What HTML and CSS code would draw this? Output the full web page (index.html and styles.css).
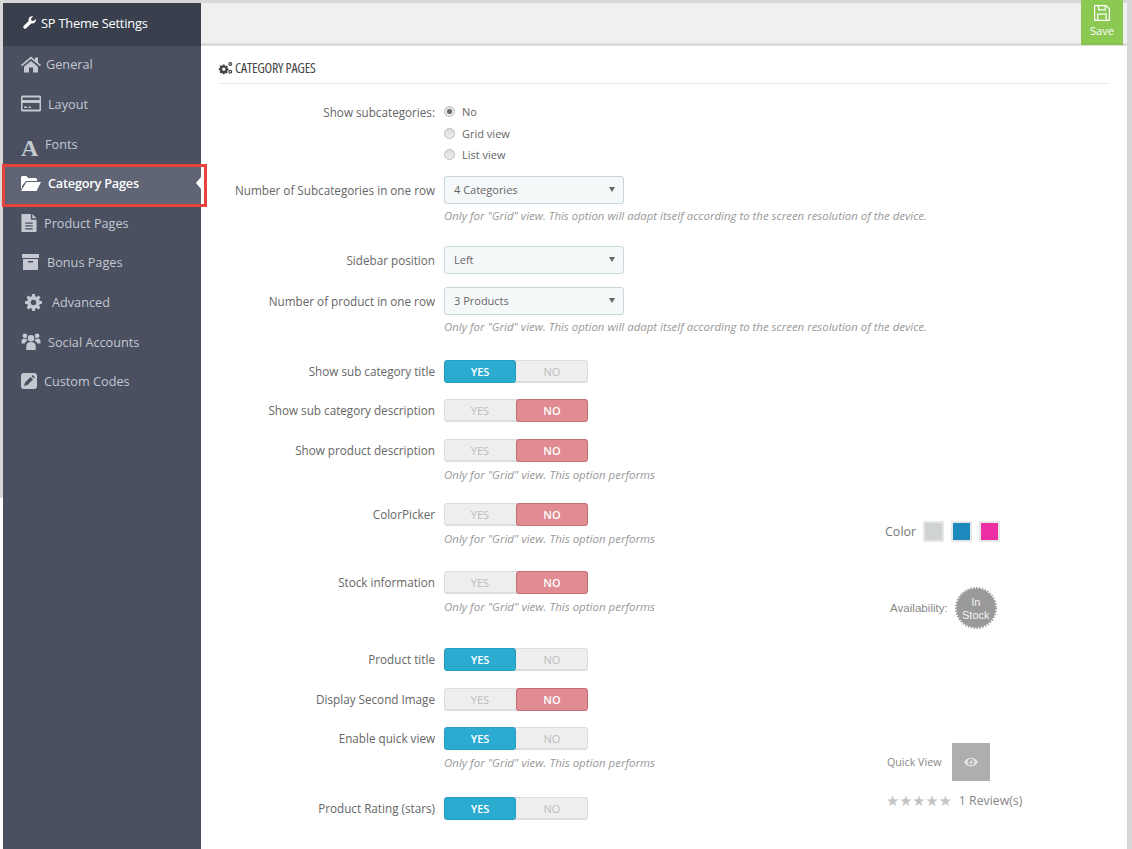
FILE: index.html
```html
<!DOCTYPE html>
<html lang="en">
<head>
<meta charset="utf-8">
<title>SP Theme Settings</title>
<link rel="stylesheet" href="styles.css">
</head>
<body>
<div class="page">
  <aside class="sidebar">
    <div class="brand">
      <svg class="brand-icon" viewBox="0 0 16 16"><path d="M15.6 3.6c.5 1.500.1 3.300-1.100 4.500-1.300 1.200-3 1.500-4.500 1L4 15.100c-.9.900-2.200.9-3 0-.9-.9-.9-2.200 0-3L7 6.100c-.5-1.500-.2-3.300 1-4.500C9.300.4 11 0 12.500.5L9.800 3.200l.6 2.500 2.500.6z"/></svg>
      <span>SP Theme Settings</span>
    </div>
    <nav class="menu">
      <a class="item"><svg class="ico ico-w20" viewBox="0 0 20 16"><path d="M10 0 0 8.500l1 1.200L10 2.200l9 7.500 1-1.200-3-2.600V1h-3v2.600zM3 10.200V16h5v-5h4v5h5v-5.800L10 4.400z"/></svg><span class="t1">General</span></a>
      <a class="item"><svg class="ico ico-w20" viewBox="0 0 20 16"><path fill-rule="evenodd" d="M1.500 0h17A1.500 1.500 0 0 1 20 1.500v13a1.500 1.500 0 0 1-1.500 1.500h-17A1.500 1.500 0 0 1 0 14.500v-13A1.500 1.500 0 0 1 1.500 0zM1.500 2v2.500h17V2zm0 5.500V14h17V7.500zM3 11h3v1.500H3zm4.500 0H10v1.500H7.500z"/></svg><span class="t2">Layout</span></a>
      <a class="item"><span class="letter">A</span><span class="t-fonts">Fonts</span></a>
      <a class="item active"><svg class="ico ico-w20" viewBox="0 0 20 15"><path d="M0 1.500A1.500 1.500 0 0 1 1.500 0h4L7 2h7.500A1.500 1.500 0 0 1 16 3.500V5H5L1 10V13L0 12zM5.500 6H20l-4.500 9H0z"/></svg><span class="t2">Category Pages</span><i class="caret"></i><i class="redbox"></i></a>
      <a class="item"><svg class="ico ico-w16" viewBox="0 0 16 19"><path fill-rule="evenodd" d="M1 0h9v6h6v12a1 1 0 0 1-1 1H1a1 1 0 0 1-1-1V1a1 1 0 0 1 1-1zm10.500 0L16 4.500h-4.500zM4 9v1.300h8V9zm0 3v1.300h8V12zm0 3v1.300h8V15z"/></svg><span class="t0">Product Pages</span></a>
      <a class="item"><svg class="ico ico-w17" viewBox="0 0 17 16"><path fill-rule="evenodd" d="M0 0h17v4H0zM1 5h15v11H1zm5 2v1.500h5V7z"/></svg><span class="t3">Bonus Pages</span></a>
      <a class="item"><svg class="ico ico-cog" viewBox="0 0 16 16"><path fill-rule="evenodd" d="M6.800 0h2.400l.4 2.200 1.300.6 1.900-1.300 1.700 1.700-1.300 1.900.6 1.300 2.200.4v2.400l-2.200.4-.6 1.300 1.300 1.900-1.700 1.700-1.900-1.300-1.300.6-.4 2.200H6.800l-.4-2.200-1.300-.6-1.900 1.300-1.700-1.700 1.300-1.900-.6-1.300L0 9.200V6.800l2.200-.4.6-1.300-1.300-1.900 1.700-1.700 1.900 1.300 1.300-.6zM8 5.400a2.600 2.600 0 1 0 0 5.200 2.600 2.600 0 0 0 0-5.200z"/></svg><span class="t4">Advanced</span></a>
      <a class="item"><svg class="ico ico-w20" viewBox="0 0 20 18"><circle cx="10" cy="5.500" r="3.500"/><circle cx="3.500" cy="3" r="2.500"/><circle cx="16.500" cy="3" r="2.500"/><path d="M5 18v-4.500C5 11 7 9.500 10 9.500s5 1.500 5 4V18zM0 11V8c0-1 1-2 2-2h3l1 2.500C4.500 9 3.800 10 3.500 11zM20 11V8c0-1-1-2-2-2h-3l-1 2.500c1.500.5 2.200 1.500 2.500 2.500z"/></svg><span class="t2">Social Accounts</span></a>
      <a class="item"><svg class="ico ico-w16" viewBox="0 0 16 16"><path fill-rule="evenodd" d="M3 0h10a3 3 0 0 1 3 3v10a3 3 0 0 1-3 3H3a3 3 0 0 1-3-3V3a3 3 0 0 1 3-3zm6.500 4L4 9.500 3 13l3.500-1L12 6.500zm1-1L12.900 5.600 14 4.400 11.600 2z"/></svg><span class="t0">Custom Codes</span></a>
    </nav>
  </aside>

  <main class="content">
    <header class="topbar">
      <button class="save" type="button">
        <svg class="save-icon" viewBox="0 0 16 16"><path fill-rule="evenodd" d="M1 0h11.500L16 3.500V15a1 1 0 0 1-1 1H1a1 1 0 0 1-1-1V1a1 1 0 0 1 1-1zm.2 1.200v13.600h2V8.500h9.600v6.300h2V4L12 1.200h-.2V5.500H4V1.200zM5.200 1.200v3.100h5.400V1.200zM4.400 9.700v5.100h7.200V9.700z"/></svg>
        <span>Save</span>
      </button>
    </header>

    <section class="panel">
      <h2 class="panel-title">
        <svg class="cogs" viewBox="0 0 16 14"><path fill-rule="evenodd" d="M4.400 3h2l.3 1.300.9.400 1.200-.7 1.300 1.300-.7 1.200.4.900 1.200.3v2l-1.200.3-.4.900.7 1.200-1.300 1.300-1.200-.7-.9.400-.3 1.200h-2l-.3-1.200-.9-.4-1.200.7L.5 11.800l.7-1.200-.4-.9L-.4 9.400v-2l1.200-.3.4-.9-.7-1.200L1.800 3.700 3 4.400l.9-.4zM5.400 6.500a1.900 1.900 0 1 0 0 3.800 1.900 1.900 0 0 0 0-3.800zM13 0a2.300 2.300 0 1 1 0 4.600A2.300 2.300 0 0 1 13 0zm0 1.400a.9.900 0 1 0 0 1.800.9.900 0 0 0 0-1.800zM13 9a2.300 2.300 0 1 1 0 4.600A2.300 2.300 0 0 1 13 9zm0 1.400a.9.900 0 1 0 0 1.800.9.900 0 0 0 0-1.800z"/></svg>
        <span>CATEGORY PAGES</span>
      </h2>

      <div class="row row-radio">
        <label class="label">Show subcategories:</label>
        <div class="radios">
          <div class="radio-line"><i class="radio on"></i><span>No</span></div>
          <div class="radio-line"><i class="radio"></i><span>Grid view</span></div>
          <div class="radio-line"><i class="radio"></i><span>List view</span></div>
        </div>
      </div>

      <div class="row r-select1">
        <label class="label">Number of Subcategories in one row</label>
        <div><div class="select"><span>4 Categories</span><i class="arrow"></i></div>
        <p class="help help-long">Only for "Grid" view. This option will adapt itself according to the screen resolution of the device.</p></div>
      </div>

      <div class="row r-select2">
        <label class="label">Sidebar position</label>
        <div><div class="select"><span>Left</span><i class="arrow"></i></div></div>
      </div>

      <div class="row r-select3">
        <label class="label">Number of product in one row</label>
        <div><div class="select"><span>3 Products</span><i class="arrow"></i></div>
        <p class="help help-long">Only for "Grid" view. This option will adapt itself according to the screen resolution of the device.</p></div>
      </div>

      <div class="row r-t1">
        <label class="label">Show sub category title</label>
        <div class="toggle"><b class="yes on">YES</b><b class="no">NO</b></div>
      </div>

      <div class="row r-t2">
        <label class="label">Show sub category description</label>
        <div class="toggle"><b class="yes">YES</b><b class="no on">NO</b></div>
      </div>

      <div class="row r-t3">
        <label class="label">Show product description</label>
        <div><div class="toggle"><b class="yes">YES</b><b class="no on">NO</b></div>
        <p class="help">Only for "Grid" view. This option performs</p></div>
      </div>

      <div class="row r-t4">
        <label class="label">ColorPicker</label>
        <div><div class="toggle"><b class="yes">YES</b><b class="no on">NO</b></div>
        <p class="help">Only for "Grid" view. This option performs</p></div>
        <div class="demo demo-color">
          <span>Color</span>
          <i class="swatch s-grey"></i><i class="swatch s-blue"></i><i class="swatch s-pink"></i>
        </div>
      </div>

      <div class="row r-t5">
        <label class="label">Stock information</label>
        <div><div class="toggle"><b class="yes">YES</b><b class="no on">NO</b></div>
        <p class="help">Only for "Grid" view. This option performs</p></div>
        <div class="demo demo-stock">
          <span>Availability:</span>
          <div class="badge">
            <svg class="badge-bg" viewBox="0 0 44 44"><circle cx="22" cy="22" r="20.500" fill="#9a9a9a" stroke="#9a9a9a" stroke-width="3" stroke-dasharray="1.500 1.500"/></svg>
            <span class="badge-text">In<br>Stock</span>
          </div>
        </div>
      </div>

      <div class="row r-t6">
        <label class="label">Product title</label>
        <div class="toggle"><b class="yes on">YES</b><b class="no">NO</b></div>
      </div>

      <div class="row r-t7">
        <label class="label">Display Second Image</label>
        <div class="toggle"><b class="yes">YES</b><b class="no on">NO</b></div>
      </div>

      <div class="row r-t8">
        <label class="label">Enable quick view</label>
        <div><div class="toggle"><b class="yes on">YES</b><b class="no">NO</b></div>
        <p class="help">Only for "Grid" view. This option performs</p></div>
        <div class="demo demo-quick">
          <span>Quick View</span>
          <div class="eye-box"><svg viewBox="0 0 16 10"><path fill-rule="evenodd" d="M8 0c3.500 0 6.300 2 8 5-1.700 3-4.500 5-8 5S1.700 8 0 5c1.700-3 4.500-5 8-5zm0 1.200a3.800 3.800 0 1 0 0 7.600 3.800 3.800 0 0 0 0-7.600zM8 3a2 2 0 1 1-2 2c0-.4.800.3 1.300 0C7.800 4.700 7.500 3.200 8 3z"/></svg></div>
        </div>
      </div>

      <div class="row r-t9">
        <label class="label">Product Rating (stars)</label>
        <div class="toggle"><b class="yes on">YES</b><b class="no">NO</b></div>
        <div class="demo demo-rating">
          <span class="stars">★★★★★</span>
          <span>1 Review(s)</span>
        </div>
      </div>
    </section>
  </main>
</div>
</body>
</html>
```
FILE: styles.css
```css
* { box-sizing: border-box; }
html, body { margin: 0; height: 100%; }
body {
  background: #fff;
  font-family: "Open Sans", sans-serif;
  font-size: 12px;
  color: #666;
  overflow: hidden;
}
.page {
  display: flex;
  height: 849px;
  padding: 3px 5px 0 3px;
  background: linear-gradient(#d8d8d8, #d8d8d8) left top / 3px 498px no-repeat,
              linear-gradient(#d8d8d8, #d8d8d8) left top / 100% 3px no-repeat,
              linear-gradient(#d8d8d8, #d8d8d8) right top / 5px 100% no-repeat;
}
.sidebar { width: 198px; flex: none; background: #4a5060; color: #c3c8d1; }
.brand {
  height: 43px;
  display: flex;
  align-items: center;
  padding: 0 0 4px 20px;
  gap: 5px;
  background: #393f4d;
  color: #fff;
  font-size: 12.800px;
  font-weight: 500;
  letter-spacing: -.2px;
}
.brand-icon { width: 13px; height: 13px; fill: #fff; }
.menu { display: flex; flex-direction: column; }
.item {
  position: relative;
  height: 39.63px;
  display: flex;
  align-items: center;
  padding: 0 0 3px 18px;
  font-size: 12.700px;
}
.ico { fill: #c3c8d1; flex: none; }
.ico-w20 { width: 20px; height: 17px; }
.ico-w16 { width: 16px; height: 18px; }
.ico-w17 { width: 17px; height: 16px; margin-left: 1px; }
.ico-cog { width: 17px; height: 17px; margin-left: 4px; }
.letter {
  width: 19px;
  font-family: "Liberation Serif", serif;
  font-size: 24px;
  font-weight: 700;
  line-height: 20px;
  color: #c3c8d1;
  position: relative;
  top: 4px;
}
.t0 { margin-left: 7px; }
.t1 { margin-left: 5px; }
.t-fonts { margin-left: 5px; }
.t2 { margin-left: 7px; }
.t3 { margin-left: 8px; }
.t4 { margin-left: 10px; }
.item.active { background: #5f6575; color: #fff; font-weight: 600; letter-spacing: -.2px; }
.item.active .ico { fill: #fff; }
.caret {
  position: absolute;
  right: 0;
  top: 12px;
  border: 6px solid transparent;
  border-right: 5px solid #fff;
  border-left: 0;
}
.redbox {
  position: absolute;
  left: -1px;
  right: -6px;
  top: -1px;
  height: 43px;
  border: 3px solid #e9423f;
}
.content { flex: 1; min-width: 0; background: #fff; }
.topbar {
  height: 43px;
  background: #f0f0f0;
  border-bottom: 3px solid #dcdcdc;
  display: flex;
  justify-content: flex-end;
  padding-right: 4px;
}
.save {
  width: 42px;
  height: 45px;
  margin-top: -3px;
  padding: 5px 0 0;
  border: 0;
  border-bottom: 2px solid #84c24e;
  background: #8bc953;
  color: #fff;
  font: 400 11px "Open Sans", sans-serif;
  display: flex;
  flex-direction: column;
  align-items: center;
  gap: 2px;
  flex: none;
  position: relative;
}
.save-icon { width: 16px; height: 16px; fill: #fff; }
.panel { padding: 0 18px; }
.panel-title {
  margin: 0;
  height: 38px;
  padding-top: 14px;
  border-bottom: 1px solid #e9e9e9;
  display: flex;
  align-items: flex-start;
  gap: 2px;
  font-size: 14px;
  font-weight: 400;
  font-stretch: 75%;
  color: #444;
  line-height: 16px;
  letter-spacing: -.25px;
}
.cogs { width: 14px; height: 12px; fill: #444; margin-top: 2px; overflow: visible; }
.row {
  display: grid;
  grid-template-columns: 216px 441px auto;
  column-gap: 9px;
  align-items: start;
  position: relative;
}
.label {
  text-align: right;
  line-height: 23px;
  color: #666;
  font-size: 11.700px;
  white-space: nowrap;
}
.row-radio { margin-top: 17px; }
.row-radio .label { line-height: 22px; }
.radios { display: flex; flex-direction: column; font-size: 11px; }
.radio-line { height: 21.500px; display: flex; align-items: center; gap: 7px; color: #666; }
.radio {
  width: 11px; height: 11px; border-radius: 50%;
  border: 1px solid #bbb;
  background: linear-gradient(#ddd, #eee);
  display: block;
  position: relative;
}
.radio.on::after {
  content: ""; position: absolute; left: 2px; top: 2px;
  width: 5px; height: 5px; border-radius: 50%; background: #666;
}
.r-select1 { margin-top: 10px; }
.r-select2 { margin-top: 21px; }
.r-select3 { margin-top: 13px; }
.r-select1 .label, .r-select2 .label, .r-select3 .label { line-height: 28px; }
.select {
  width: 180px;
  height: 28px;
  border: 1px solid #c9d5dc;
  border-radius: 3px;
  background: #f5f8f9;
  display: flex;
  align-items: center;
  justify-content: space-between;
  padding: 0 8px 0 9px;
  font-size: 11px;
  color: #666;
}
.arrow {
  border: 3px solid transparent;
  border-top: 5px solid #666;
  border-bottom: 0;
}
.help {
  margin: 4px 0 0;
  font-size: 11.500px;
  font-style: italic;
  line-height: 18px;
  color: #999;
  white-space: nowrap;
}
.help-long { margin-top: 3px; font-size: 11.430px; }
.toggle {
  width: 144px;
  height: 23px;
  display: flex;
  background: #eee;
  border: 1px solid #ddd;
  border-bottom-width: 2px;
  border-radius: 3px;
}
.toggle b {
  flex: 0 0 72px;
  margin: -1px 0 -2px;
  display: flex;
  align-items: center;
  justify-content: center;
  font-size: 11px;
  font-weight: 400;
  color: #bdbdbd;
}
.toggle .yes { margin-left: -1px; }
.toggle .no { margin-right: -1px; }
.toggle .yes.on { background: #2cabd0; border: 1px solid #289cbe; border-radius: 3px; color: #fff; font-weight: 600; }
.toggle .no.on { background: #e08c92; border: 1px solid #c66d72; border-radius: 3px; color: #fff; font-weight: 600; }
.r-t1 { margin-top: 24px; }
.r-t2 { margin-top: 16px; }
.r-t3 { margin-top: 17px; }
.r-t4 { margin-top: 19px; }
.r-t5 { margin-top: 23px; }
.r-t6 { margin-top: 32px; }
.r-t7 { margin-top: 17px; }
.r-t8 { margin-top: 16px; }
.r-t9 { margin-top: 25px; }
.demo { position: absolute; display: flex; align-items: center; color: #777; white-space: nowrap; }
.demo-color { left: 666px; top: 18px; gap: 6px; font-size: 12.500px; }
.swatch { display: block; width: 21px; height: 21px; border: 2px solid #e7e7e7; }
.swatch + .swatch { margin-left: 1px; }
.s-grey { background: #cfd3d3; margin-left: 1px; }
.s-blue { background: #1c89bd; }
.s-pink { background: #ee2fa3; }
.demo-stock { left: 671px; top: 16px; gap: 7px; font-size: 11.600px; color: #888; font-family: "Liberation Sans", sans-serif; }
.badge { position: relative; width: 42px; height: 42px; }
.badge-bg { display: block; width: 42px; height: 42px; }
.badge-text {
  position: absolute; inset: 0; padding-top: 2px; display: flex; align-items: center; justify-content: center;
  text-align: center; color: #f2f2f2; font-size: 11px; line-height: 13px;
}
.demo-quick { left: 668px; top: 16px; gap: 11px; font-size: 10.700px; color: #888; }
.eye-box { width: 38px; height: 38px; background: #aeaeae; display: flex; align-items: center; justify-content: center; }
.eye-box svg { width: 14px; height: 10px; fill: #e4e4e4; }
.demo-rating { left: 667px; top: -5px; gap: 7px; font-size: 12.300px; color: #888; }
.stars { color: #c4c4c4; font-family: "DejaVu Sans", sans-serif; font-size: 14.700px; }
```
